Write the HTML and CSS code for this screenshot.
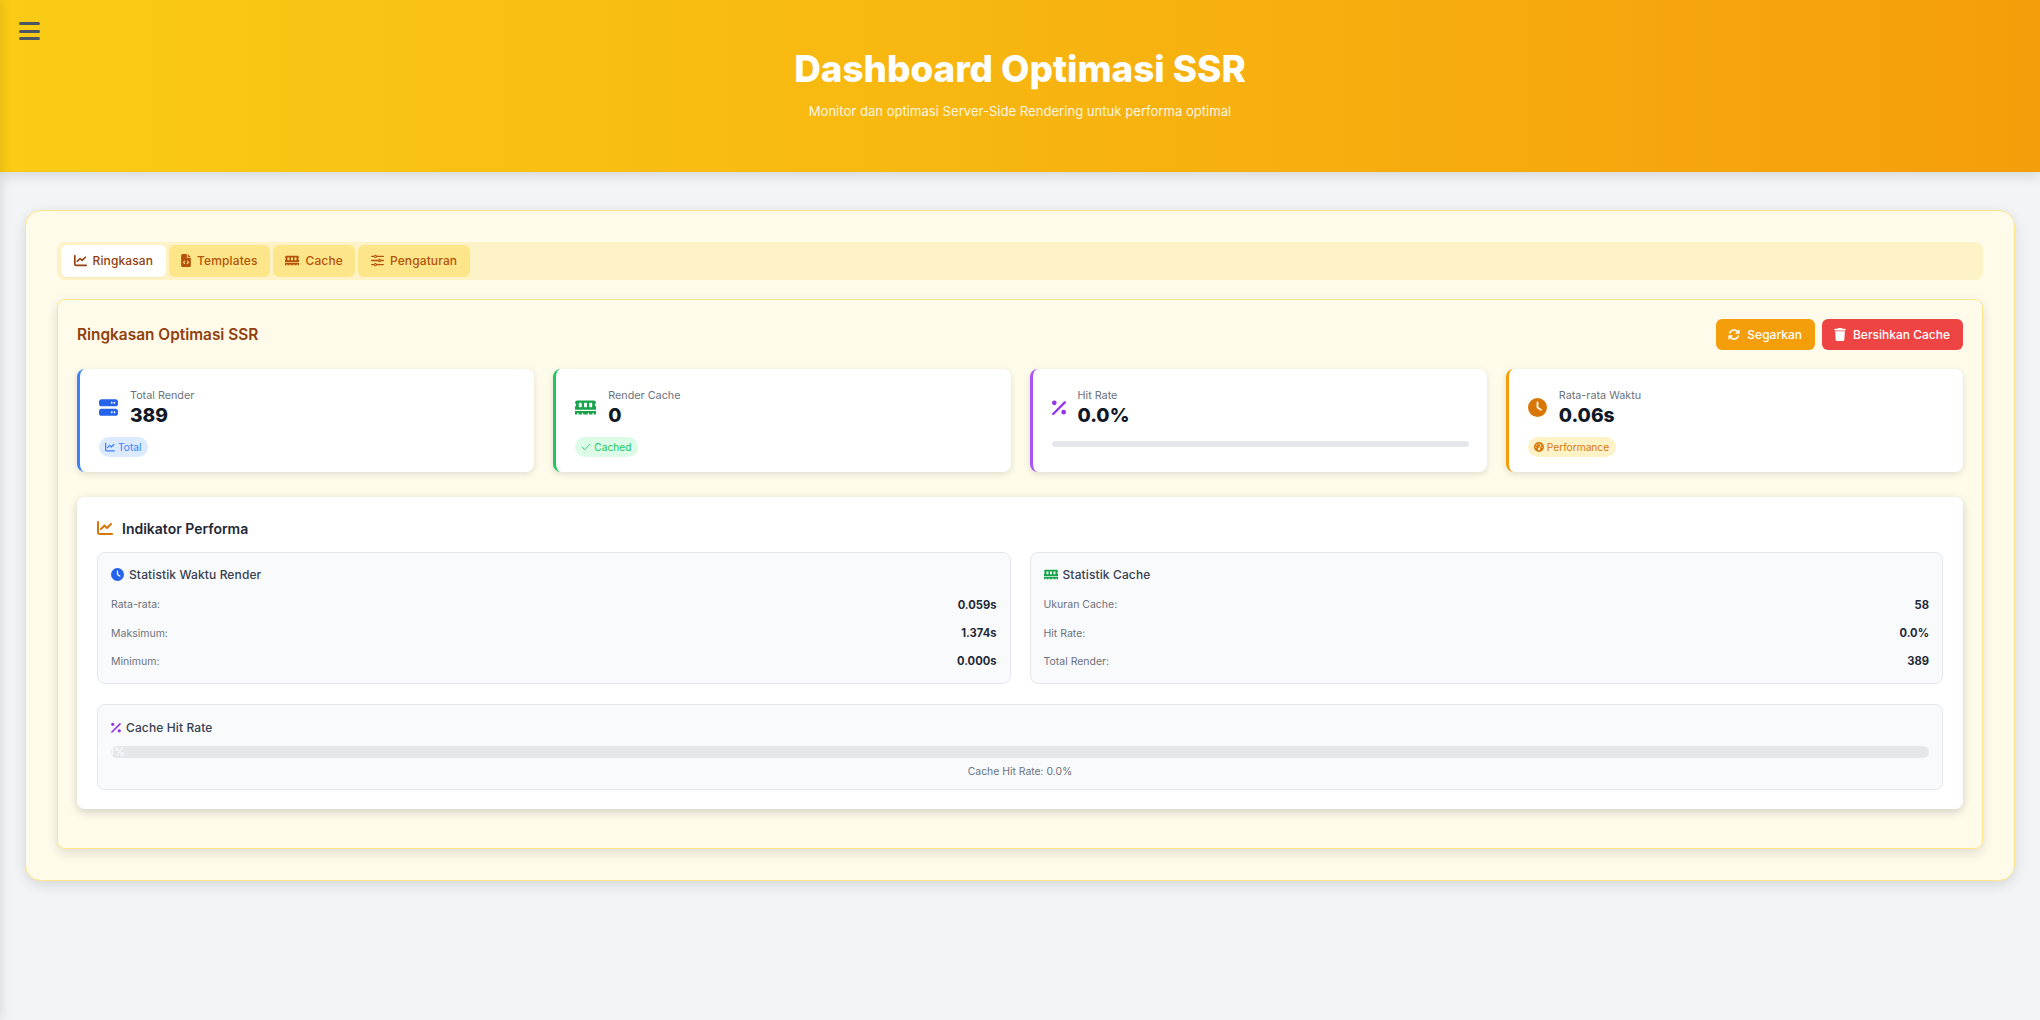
FILE: index.html
```html
<!DOCTYPE html>
<html lang="id">
<head>
    <meta charset="UTF-8">
    <meta name="viewport" content="width=device-width, initial-scale=1.0">
    <title>Dashboard Optimasi SSR</title>
    <link rel="stylesheet" href="styles.css">
</head>
<body>
    <svg class="icon-defs" xmlns="http://www.w3.org/2000/svg">
        <symbol id="i-chart" viewBox="0 0 512 512"><path d="M64 64c0-17.7-14.3-32-32-32S0 46.3 0 64V400c0 44.2 35.8 80 80 80H480c17.7 0 32-14.3 32-32s-14.3-32-32-32H80c-8.8 0-16-7.2-16-16V64zm406.6 86.6c12.5-12.5 12.5-32.8 0-45.3s-32.8-12.5-45.3 0L320 210.7l-57.4-57.4c-12.5-12.5-32.8-12.5-45.3 0l-112 112c-12.5 12.5-12.5 32.8 0 45.3s32.8 12.5 45.3 0L240 221.3l57.4 57.4c12.5 12.5 32.8 12.5 45.3 0l128-128z"/></symbol>
        <symbol id="i-file" viewBox="0 0 384 512"><path d="M64 0C29 0 0 29 0 64v384c0 35 29 64 64 64h256c35 0 64-29 64-64V160H256c-18 0-32-14-32-32V0zm192 0v128h128zM154 268c8 8 8 20 0 28l-34 34 34 34c8 8 8 20 0 28s-20 8-28 0l-48-48c-8-8-8-20 0-28l48-48c8-8 20-8 28 0zm104 0l48 48c8 8 8 20 0 28l-48 48c-8 8-20 8-28 0s-8-20 0-28l34-34-34-34c-8-8-8-20 0-28s20-8 28 0z"/></symbol>
        <symbol id="i-memory" viewBox="0 0 576 512"><path fill-rule="evenodd" d="M64 64C29 64 0 93 0 128v8c19 6 32 24 32 45s-13 39-32 45v94h576v-94c-19-6-32-24-32-45s13-39 32-45v-8c0-35-29-64-64-64zM120 128h48c9 0 16 7 16 16v88c0 9-7 16-16 16h-48c-9 0-16-7-16-16v-88c0-9 7-16 16-16zM264 128h48c9 0 16 7 16 16v88c0 9-7 16-16 16h-48c-9 0-16-7-16-16v-88c0-9 7-16 16-16zM408 128h48c9 0 16 7 16 16v88c0 9-7 16-16 16h-48c-9 0-16-7-16-16v-88c0-9 7-16 16-16z"/><path d="M0 352V448H64V416c0-9 7-16 16-16s16 7 16 16v32H192V416c0-9 7-16 16-16s16 7 16 16v32H352V416c0-9 7-16 16-16s16 7 16 16v32H480V416c0-9 7-16 16-16s16 7 16 16v32h64V352z"/></symbol>
        <symbol id="i-sliders" viewBox="0 0 512 512"><path fill-rule="evenodd" d="M0 96c0-14 11-26 26-26h92a60 60 0 0 1 112 0h256c15 0 26 12 26 26s-11 26-26 26H230a60 60 0 0 1-112 0H26c-15 0-26-12-26-26zm174 24a24 24 0 1 0 0-48 24 24 0 0 0 0 48zM0 256c0-14 11-26 26-26h256a60 60 0 0 1 112 0h92c15 0 26 12 26 26s-11 26-26 26h-92a60 60 0 0 1-112 0H26c-15 0-26-12-26-26zm338 24a24 24 0 1 0 0-48 24 24 0 0 0 0 48zM0 416c0-14 11-26 26-26h92a60 60 0 0 1 112 0h256c15 0 26 12 26 26s-11 26-26 26H230a60 60 0 0 1-112 0H26c-15 0-26-12-26-26zm174 24a24 24 0 1 0 0-48 24 24 0 0 0 0 48z"/></symbol>
        <symbol id="i-sync" viewBox="0 0 512 512"><path d="M105.1 202.6c7.7-21.8 20.2-42.3 37.8-59.8c62.5-62.5 163.8-62.5 226.3 0L386.3 160H352c-17.7 0-32 14.3-32 32s14.3 32 32 32H463.5c0 0 0 0 0 0h.4c17.7 0 32-14.3 32-32V80c0-17.7-14.3-32-32-32s-32 14.3-32 32v35.2L414.4 97.6c-87.5-87.5-229.3-87.5-316.8 0C73.2 122 55.6 150.7 44.8 181.4c-5.9 16.7 2.9 34.9 19.5 40.8s34.9-2.9 40.8-19.5zM39 289.3c-5 1.5-9.8 4.2-13.7 8.2c-4 4-6.7 8.8-8.1 14c-.3 1.2-.6 2.5-.8 3.8c-.3 1.7-.4 3.4-.4 5.1V432c0 17.7 14.3 32 32 32s32-14.3 32-32V396.9l17.6 17.5 0 0c87.5 87.4 229.3 87.4 316.7 0c24.4-24.4 42.1-53.1 52.9-83.7c5.9-16.7-2.9-34.9-19.5-40.8s-34.9 2.9-40.8 19.5c-7.7 21.8-20.2 42.3-37.8 59.8c-62.5 62.5-163.8 62.5-226.3 0l-.1-.1L125.6 352H160c17.7 0 32-14.3 32-32s-14.3-32-32-32H48.4c-1.6 0-3.2 .1-4.8 .3s-3.1 .5-4.6 1z"/></symbol>
        <symbol id="i-trash" viewBox="0 0 448 512"><path d="M135.2 17.7L128 32H32C14.3 32 0 46.3 0 64S14.3 96 32 96H416c17.7 0 32-14.3 32-32s-14.3-32-32-32H320l-7.2-14.3C307.4 6.8 296.3 0 284.2 0H163.8c-12.1 0-23.2 6.8-28.6 17.7zM416 128H32L53.2 467c1.6 25.3 22.6 45 47.9 45H346.9c25.3 0 46.3-19.7 47.9-45L416 128z"/></symbol>
        <symbol id="i-server" viewBox="0 0 512 512"><path fill-rule="evenodd" d="M64 32C29 32 0 61 0 96v64c0 35 29 64 64 64h384c35 0 64-29 64-64V96c0-35-29-64-64-64zm280 72a24 24 0 1 1 0 48 24 24 0 0 1 0-48zm72 0a24 24 0 1 1 0 48 24 24 0 0 1 0-48zM64 288c-35 0-64 29-64 64v64c0 35 29 64 64 64h384c35 0 64-29 64-64v-64c0-35-29-64-64-64zm280 72a24 24 0 1 1 0 48 24 24 0 0 1 0-48zm72 0a24 24 0 1 1 0 48 24 24 0 0 1 0-48z"/></symbol>
        <symbol id="i-percent" viewBox="0 0 384 512"><path d="M374 93c12 12 12 33 0 45L55 457c-12 12-33 12-45 0s-12-33 0-45L329 93c12-12 33-12 45 0zM128 128a64 64 0 1 1-128 0 64 64 0 0 1 128 0zm256 256a64 64 0 1 1-128 0 64 64 0 0 1 128 0z"/></symbol>
        <symbol id="i-clock" viewBox="0 0 512 512"><path d="M256 0a256 256 0 1 1 0 512 256 256 0 0 1 0-512zm-24 120v136c0 8 4 16 11 20l96 64c11 7 26 4 33-7s4-26-7-33l-85-57V120c0-13-11-24-24-24s-24 11-24 24z"/></symbol>
        <symbol id="i-check" viewBox="0 0 448 512"><path fill="none" stroke="currentColor" stroke-width="46" stroke-linecap="round" stroke-linejoin="round" d="M30 270L155 390L420 125"/></symbol>
        <symbol id="i-gauge" viewBox="0 0 512 512"><path d="M256 0a256 256 0 1 1 0 512 256 256 0 0 1 0-512zm32 96a32 32 0 1 0-64 0 32 32 0 0 0 64 0zm-32 320c35 0 64-29 64-64 0-17-7-33-18-44l67-156c5-12 0-26-12-31s-26 0-31 12l-67 156c-35 1-63 29-63 63 0 35 29 64 64 64zM176 144a32 32 0 1 0-64 0 32 32 0 0 0 64 0zM96 288a32 32 0 1 0 0-64 32 32 0 0 0 0 64zm352-32a32 32 0 1 0-64 0 32 32 0 0 0 64 0z"/></symbol>
    </svg>

    <div class="sidebar"></div>

    <header class="page-header">
        <button class="menu-btn" aria-label="Menu"><span></span><span></span><span></span></button>
        <h1>Dashboard Optimasi SSR</h1>
        <p>Monitor dan optimasi Server-Side Rendering untuk performa optimal</p>
    </header>

    <main class="container">
        <nav class="tabs">
            <a class="tab active"><svg class="icon"><use href="#i-chart"/></svg>Ringkasan</a>
            <a class="tab"><svg class="icon icon-narrow"><use href="#i-file"/></svg>Templates</a>
            <a class="tab"><svg class="icon icon-wide"><use href="#i-memory"/></svg>Cache</a>
            <a class="tab"><svg class="icon"><use href="#i-sliders"/></svg>Pengaturan</a>
        </nav>

        <section class="panel">
            <div class="panel-head">
                <h2>Ringkasan Optimasi SSR</h2>
                <div class="actions">
                    <button class="btn btn-amber"><svg class="icon"><use href="#i-sync"/></svg>Segarkan</button>
                    <button class="btn btn-red"><svg class="icon"><use href="#i-trash"/></svg>Bersihkan Cache</button>
                </div>
            </div>

            <div class="stats">
                <div class="stat stat-blue">
                    <div class="stat-top">
                        <svg class="stat-icon"><use href="#i-server"/></svg>
                        <div>
                            <div class="stat-label">Total Render</div>
                            <div class="stat-value">389</div>
                        </div>
                    </div>
                    <span class="badge"><svg class="icon"><use href="#i-chart"/></svg>Total</span>
                </div>
                <div class="stat stat-green">
                    <div class="stat-top">
                        <svg class="stat-icon stat-icon-wide"><use href="#i-memory"/></svg>
                        <div>
                            <div class="stat-label">Render Cache</div>
                            <div class="stat-value">0</div>
                        </div>
                    </div>
                    <span class="badge"><svg class="icon"><use href="#i-check"/></svg>Cached</span>
                </div>
                <div class="stat stat-purple">
                    <div class="stat-top">
                        <svg class="stat-icon stat-icon-small"><use href="#i-percent"/></svg>
                        <div>
                            <div class="stat-label">Hit Rate</div>
                            <div class="stat-value">0.0%</div>
                        </div>
                    </div>
                    <div class="mini-bar"></div>
                </div>
                <div class="stat stat-amber">
                    <div class="stat-top">
                        <svg class="stat-icon"><use href="#i-clock"/></svg>
                        <div>
                            <div class="stat-label">Rata-rata Waktu</div>
                            <div class="stat-value">0.06s</div>
                        </div>
                    </div>
                    <span class="badge"><svg class="icon"><use href="#i-gauge"/></svg>Performance</span>
                </div>
            </div>

            <div class="perf">
                <h3><svg class="perf-icon"><use href="#i-chart"/></svg>Indikator Performa</h3>
                <div class="perf-grid">
                    <div class="box">
                        <h4><svg class="icon c-blue"><use href="#i-clock"/></svg>Statistik Waktu Render</h4>
                        <div class="row"><span>Rata-rata:</span><b>0.059s</b></div>
                        <div class="row"><span>Maksimum:</span><b>1.374s</b></div>
                        <div class="row"><span>Minimum:</span><b>0.000s</b></div>
                    </div>
                    <div class="box">
                        <h4><svg class="icon icon-wide c-green"><use href="#i-memory"/></svg>Statistik Cache</h4>
                        <div class="row"><span>Ukuran Cache:</span><b>58</b></div>
                        <div class="row"><span>Hit Rate:</span><b>0.0%</b></div>
                        <div class="row"><span>Total Render:</span><b>389</b></div>
                    </div>
                </div>
                <div class="box box-rate">
                    <h4><svg class="icon icon-narrow c-purple"><use href="#i-percent"/></svg>Cache Hit Rate</h4>
                    <div class="progress"><div class="progress-fill">0.0%</div></div>
                    <p class="caption">Cache Hit Rate: 0.0%</p>
                </div>
            </div>
        </section>
    </main>
</body>
</html>
```

FILE: styles.css
```css
* {
    box-sizing: border-box;
}

body {
    font-family: Inter, "Liberation Sans", sans-serif;
    background-color: #f3f4f6;
    margin: 0;
    padding: 0;
    min-height: 1020px;
    overflow: hidden;
    color: #111827;
}

.icon-defs {
    display: none;
}

.icon {
    width: 13px;
    height: 13px;
    fill: currentColor;
    flex-shrink: 0;
}

.icon-wide {
    width: 14px;
}

.icon-narrow {
    width: 10px;
}

/* off-canvas sidebar, only its shadow shows */
.sidebar {
    position: fixed;
    top: 0;
    left: -260px;
    width: 260px;
    height: 100%;
    z-index: 5;
    box-shadow: 2px 0 10px rgba(0, 0, 0, 0.1);
}

.page-header {
    position: relative;
    height: 172px;
    padding-top: 47px;
    text-align: center;
    background: linear-gradient(90deg, #facc15, #f59e0b);
    box-shadow: 0 4px 12px rgba(0, 0, 0, 0.12);
}

.page-header h1 {
    margin: 0;
    font-size: 36.8px;
    line-height: 44px;
    font-weight: 800;
    color: #fff;
}

.page-header p {
    margin: 8px 0 0;
    font-size: 13.1px;
    line-height: 24px;
    color: rgba(255, 255, 255, 0.9);
}

.menu-btn {
    position: absolute;
    top: 22px;
    left: 19px;
    width: 21px;
    height: 18px;
    padding: 0;
    border: none;
    background: none;
    display: flex;
    flex-direction: column;
    justify-content: space-between;
}

.menu-btn span {
    display: block;
    height: 3px;
    border-radius: 2px;
    background-color: #4b5563;
}

.container {
    margin: 38px 25px 0;
    height: 671px;
    padding: 31px 31px 30px;
    background-color: #fffbeb;
    border: 1px solid #fde68a;
    border-radius: 16px;
    box-shadow: 0 4px 14px rgba(0, 0, 0, 0.12);
}

.tabs {
    display: flex;
    gap: 3px;
    height: 38px;
    padding: 3px 4px;
    margin-bottom: 19px;
    background-color: #fef3c7;
    border-radius: 8px;
}

.tab {
    display: flex;
    align-items: center;
    gap: 6px;
    padding: 0 12.5px 1px;
    font-size: 12px;
    letter-spacing: 0.01em;
    font-weight: 500;
    color: #b45309;
    background-color: #fde68a;
    border-radius: 6px;
}

.tab.active {
    color: #92400e;
    background-color: #fff;
    box-shadow: 0 1px 2px rgba(0, 0, 0, 0.05);
}

.panel {
    height: 550px;
    padding: 19px;
    background-color: #fffbeb;
    border: 1px solid #fde68a;
    border-radius: 8px;
    box-shadow: 0 4px 12px rgba(0, 0, 0, 0.12);
}

.panel-head {
    display: flex;
    align-items: center;
    justify-content: space-between;
    height: 31px;
    margin-bottom: 19px;
}

.panel-head h2 {
    margin: 0;
    font-size: 15.4px;
    font-weight: 600;
    color: #92400e;
}

.actions {
    display: flex;
    gap: 7px;
}

.btn {
    display: flex;
    align-items: center;
    gap: 7px;
    height: 31px;
    padding: 0 13px 0 12px;
    border: none;
    border-radius: 6px;
    font-family: inherit;
    font-size: 12px;
    font-weight: 500;
    color: #fff;
    cursor: pointer;
}

.btn .icon {
    width: 12px;
}

.btn-amber {
    background-color: #f59e0b;
}

.btn-red {
    background-color: #ef4444;
}

.stats {
    display: grid;
    grid-template-columns: repeat(4, 1fr);
    gap: 19px;
    margin-bottom: 25px;
}

.stat {
    height: 103px;
    padding: 20px 18px 19px 19px;
    background-color: #fff;
    border-left: 3px solid;
    border-radius: 8px;
    box-shadow: 0 2px 6px rgba(0, 0, 0, 0.12);
}

.stat-top {
    display: flex;
    align-items: center;
    gap: 12px;
}

.stat-icon {
    width: 19px;
    height: 19px;
    margin-bottom: 2px;
    fill: currentColor;
    flex-shrink: 0;
}

.stat-icon-wide {
    width: 21px;
}

.stat-icon-small {
    width: 14px;
}

.stat-label {
    font-size: 10.8px;
    line-height: 14px;
    color: #6b7280;
}

.stat-value {
    font-size: 19.2px;
    line-height: 25px;
    font-weight: 800;
    color: #111827;
}

.badge {
    display: inline-flex;
    align-items: center;
    gap: 3px;
    height: 20px;
    margin-top: 9px;
    padding: 0 7px 0 6px;
    border-radius: 10px;
    font-size: 10.2px;
}

.badge .icon {
    width: 10px;
    height: 10px;
}

.stat-blue {
    border-color: #3b82f6;
}

.stat-blue .stat-icon {
    color: #2563eb;
}

.stat-blue .badge {
    color: #3b82f6;
    background-color: #dbeafe;
}

.stat-green {
    border-color: #22c55e;
}

.stat-green .stat-icon {
    color: #16a34a;
}

.stat-green .badge {
    color: #22c55e;
    background-color: #dcfce7;
}

.stat-purple {
    border-color: #a855f7;
}

.stat-purple .stat-icon {
    color: #9333ea;
}

.stat-amber {
    border-color: #f59e0b;
}

.stat-amber .stat-icon {
    color: #d97706;
}

.stat-amber .badge {
    color: #d97706;
    background-color: #fef3c7;
}

.mini-bar {
    height: 6px;
    margin-top: 13px;
    border-radius: 3px;
    background-color: #e5e7eb;
}

.perf {
    height: 312px;
    padding: 20px;
    background-color: #fff;
    border-radius: 8px;
    box-shadow: 0 3px 10px rgba(0, 0, 0, 0.18);
}

.perf h3 {
    display: flex;
    align-items: center;
    gap: 9px;
    height: 22px;
    margin: 0 0 13px;
    font-size: 14px;
    font-weight: 600;
    color: #1f2937;
}

.perf-icon {
    width: 16px;
    height: 16px;
    fill: #d97706;
}

.perf-grid {
    display: grid;
    grid-template-columns: 1fr 1fr;
    gap: 19px;
    margin-bottom: 20px;
}

.box {
    height: 132px;
    padding: 12px 13px;
    background-color: #f9fafb;
    border: 1px solid #e5e7eb;
    border-radius: 8px;
}

.box h4 {
    display: flex;
    align-items: center;
    gap: 5px;
    height: 18px;
    margin: 0 0 7.5px;
    font-size: 12px;
    letter-spacing: 0.01em;
    font-weight: 500;
    color: #374151;
}

.row {
    display: flex;
    justify-content: space-between;
    align-items: center;
    height: 28.4px;
    font-size: 10.5px;
    color: #6b7280;
}

.row b {
    font-size: 11.2px;
    font-weight: 700;
    color: #1f2937;
}

.c-blue {
    color: #2563eb;
}

.c-green {
    color: #16a34a;
}

.c-purple {
    color: #9333ea;
}

.box-rate {
    height: 86px;
    padding-top: 13px;
}

.box-rate h4 {
    margin-bottom: 10px;
}

.progress {
    height: 12px;
    background-color: #e5e7eb;
    border-radius: 6px;
}

.progress-fill {
    width: 0;
    height: 100%;
    display: flex;
    align-items: center;
    justify-content: center;
    font-size: 11.2px;
    color: #fff;
    white-space: nowrap;
}

.caption {
    margin: 7px 0 0;
    font-size: 10.4px;
    line-height: 13px;
    text-align: center;
    color: #6b7280;
}
```
